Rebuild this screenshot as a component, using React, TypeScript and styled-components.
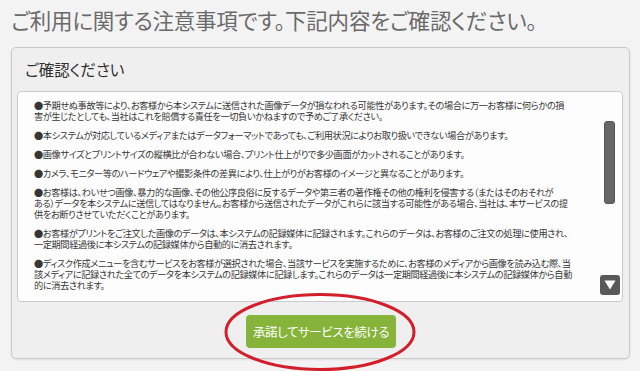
import React from "react";
import styled, { createGlobalStyle } from "styled-components";

const GlobalStyle = createGlobalStyle`
  html, body { margin: 0; padding: 0; }
  body {
    background: #f3f3f3;
    font-family: "Noto Sans CJK JP", "Noto Sans", sans-serif;
    font-feature-settings: "palt";
  }
`;

const Page = styled.div`
  width: 640px;
  height: 371px;
  padding: 0 10px 0 11px;
  box-sizing: border-box;
  overflow: hidden;
`;

const Title = styled.h1`
  margin: 0;
  height: 47px;
  display: flex;
  align-items: center;
  padding-bottom: 9px;
  box-sizing: border-box;
  font-size: 21.5px;
  font-weight: 400;
  color: #6a6a6a;
  letter-spacing: -0.2px;
  white-space: nowrap;
`;

const Panel = styled.section`
  width: 619px;
  height: 312px;
  box-sizing: border-box;
  border: 1px solid #c9c9c9;
  border-radius: 5px;
  background: #efefef;
  box-shadow: 0 1px 2px rgba(0, 0, 0, 0.08);
  display: flex;
  flex-direction: column;
`;

const PanelHeader = styled.h2`
  margin: 0;
  height: 43px;
  padding: 0 0 1px 13px;
  box-sizing: border-box;
  display: flex;
  align-items: center;
  font-size: 15.5px;
  font-weight: 400;
  color: #2f2f2f;
`;

const PanelBody = styled.div`
  padding: 0 6px 0 5px;
`;

const ScrollBox = styled.div`
  height: 211px;
  box-sizing: border-box;
  background: #fdfdfd;
  border: 1px solid #cacaca;
  border-radius: 4px;
  display: flex;
  overflow: hidden;
`;

const Content = styled.div`
  flex: 1;
  padding: 7.5px 0 0 16px;
  font-size: 9.2px;
  line-height: 11px;
  letter-spacing: -0.4px;
  color: #363636;
  overflow: hidden;
`;

const Para = styled.p`
  margin: 0 0 8px;
`;

const Line = styled.span`
  display: block;
  white-space: nowrap;
`;

const Rail = styled.div`
  width: 25px;
  flex: none;
  display: flex;
  flex-direction: column;
  align-items: center;
  justify-content: space-between;
  padding: 29px 0 6px;
  box-sizing: border-box;
`;

const Thumb = styled.div`
  width: 11px;
  height: 83px;
  border-radius: 3px;
  background: #676767;
  border: 1px solid #555;
  box-sizing: border-box;
`;

const ArrowButton = styled.div`
  width: 20px;
  height: 20px;
  border-radius: 3px;
  background: #595959;
  display: flex;
  align-items: center;
  justify-content: center;
`;

const Footer = styled.div`
  position: relative;
  flex: 1;
  display: flex;
  align-items: center;
  justify-content: center;
  padding-left: 1px;
`;

const AcceptButton = styled.button`
  width: 150px;
  height: 33px;
  padding: 0;
  border: none;
  border-radius: 4px;
  background: #86b33a;
  color: #fff;
  font-family: "Noto Sans CJK JP", "Noto Sans", sans-serif;
  font-feature-settings: "palt";
  font-size: 12.5px;
  letter-spacing: -0.4px;
  white-space: nowrap;
  cursor: pointer;
  margin-top: 2px;
`;

const Ring = styled.svg`
  position: absolute;
  left: calc(50% - 98px);
  top: -10px;
  width: 194px;
  height: 80px;
  overflow: visible;
  pointer-events: none;
`;

const paragraphs: string[][] = [
  [
    "●予期せぬ事故等により、お客様から本システムに送信された画像データが損なわれる可能性があります。その場合に万一お客様に何らかの損",
    "害が生じたとしても、当社はこれを賠償する責任を一切負いかねますので予めご了承ください。",
  ],
  ["●本システムが対応しているメディアまたはデータフォーマットであっても、ご利用状況によりお取り扱いできない場合があります。"],
  ["●画像サイズとプリントサイズの縦横比が合わない場合、プリント仕上がりで多少画面がカットされることがあります。"],
  ["●カメラ、モニター等のハードウェアや撮影条件の差異により、仕上がりがお客様のイメージと異なることがあります。"],
  [
    "●お客様は、わいせつ画像、暴力的な画像、その他公序良俗に反するデータや第三者の著作権その他の権利を侵害する（またはそのおそれが",
    "ある）データを本システムに送信してはなりません。お客様から送信されたデータがこれらに該当する可能性がある場合、当社は、本サービスの提",
    "供をお断りさせていただくことがあります。",
  ],
  [
    "●お客様がプリントをご注文した画像のデータは、本システムの記録媒体に記録されます。これらのデータは、お客様のご注文の処理に使用され、",
    "一定期間経過後に本システムの記録媒体から自動的に消去されます。",
  ],
  [
    "●ディスク作成メニューを含むサービスをお客様が選択された場合、当該サービスを実施するために、お客様のメディアから画像を読み込む際、当",
    "該メディアに記録された全てのデータを本システムの記録媒体に記録します。これらのデータは一定期間経過後に本システムの記録媒体から自動",
    "的に消去されます。",
  ],
];

export default function App() {
  return (
    <>
      <GlobalStyle />
      <Page>
        <Title>ご利用に関する注意事項です。下記内容をご確認ください。</Title>
        <Panel>
          <PanelHeader>ご確認ください</PanelHeader>
          <PanelBody>
            <ScrollBox>
              <Content>
                {paragraphs.map((lines, i) => (
                  <Para key={i}>
                    {lines.map((l, j) => (
                      <Line key={j}>{l}</Line>
                    ))}
                  </Para>
                ))}
              </Content>
              <Rail>
                <Thumb />
                <ArrowButton>
                  <svg width="12" height="10" viewBox="0 0 12 10">
                    <path d="M0.5 0.5 H11.5 L6 9.5 Z" fill="#fff" />
                  </svg>
                </ArrowButton>
              </Rail>
            </ScrollBox>
          </PanelBody>
          <Footer>
            <AcceptButton>承諾してサービスを続ける</AcceptButton>
            <Ring viewBox="0 0 194 80">
              <ellipse cx="97" cy="40" rx="94" ry="37.5" fill="none" stroke="#d21f2b" strokeWidth="3" />
            </Ring>
          </Footer>
        </Panel>
      </Page>
    </>
  );
}
